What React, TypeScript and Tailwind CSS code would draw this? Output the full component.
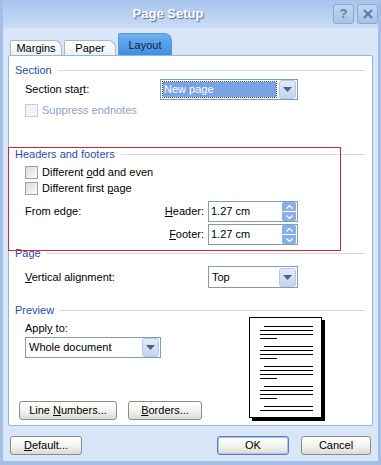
import React from 'react';

// XP-style little widgets
const Checkbox: React.FC<{ disabled?: boolean }> = ({ disabled }) => (
    <span
        className={`w-[13px] h-[13px] shrink-0 border ${disabled ? 'border-[#c3cfdf] bg-[#f1f4f8]' : 'border-[#8ea4c1] bg-gradient-to-br from-[#dcdcd6] to-[#fcfcfb]'}`}
    />
);

const DropArrow: React.FC = () => (
    <span className="w-[17px] h-[19px] shrink-0 rounded-[3px] border border-[#b7c9e6] bg-gradient-to-b from-[#e3ebf8] to-[#c3d4ef] flex items-center justify-center">
        <svg width="9" height="5" viewBox="0 0 9 5">
            <path d="M0 0H9L4.5 5Z" fill="#4d6185" />
        </svg>
    </span>
);

const Spinner: React.FC = () => (
    <span className="w-[14px] h-[19px] shrink-0 flex flex-col gap-px">
        <span className="flex-1 rounded-t-[2px] bg-[#8aaee6] flex items-center justify-center">
            <svg width="7" height="4" viewBox="0 0 7 4">
                <path d="M0.5 3.5L3.5 0.5L6.5 3.5" stroke="#ffffff" strokeWidth="1.2" fill="none" />
            </svg>
        </span>
        <span className="flex-1 rounded-b-[2px] bg-[#8aaee6] flex items-center justify-center">
            <svg width="7" height="4" viewBox="0 0 7 4">
                <path d="M0.5 0.5L3.5 3.5L6.5 0.5" stroke="#ffffff" strokeWidth="1.2" fill="none" />
            </svg>
        </span>
    </span>
);

const GroupHeader: React.FC<{ title: string; className?: string }> = ({ title, className }) => (
    <div className={`h-[13px] flex items-center gap-[6px] ${className ?? ''}`}>
        <span className="text-[#1f4ea6] leading-[13px]">{title}</span>
        <span className="flex-1 h-px bg-[#d3d9e1]" />
    </div>
);

const XpButton: React.FC<{ children: React.ReactNode; className?: string; isDefault?: boolean }> = ({ children, className, isDefault }) => (
    <button
        className={`h-[19px] rounded-[3px] border flex items-center justify-center text-black bg-gradient-to-b from-[#ffffff] via-[#f3f3ef] to-[#dcdcd6] ${isDefault ? 'border-[#5b7fb5] shadow-[inset_0_0_0_1px_#a9c4ec]' : 'border-[#8c8c8c]'} ${className ?? ''}`}
    >
        <span>{children}</span>
    </button>
);

const PagePreview: React.FC = () => {
    const groups = [9, 29, 49, 69, 89];
    return (
        <svg width="76" height="104" viewBox="0 0 76 104">
            <rect x="3" y="3" width="73" height="101" fill="#000" />
            <rect x="0.5" y="0.5" width="72" height="100" fill="#fff" stroke="#000" />
            {groups.map((g, i) => (
                <g key={g} fill="#000">
                    <rect x="15" y={g} width="49" height="1" />
                    <rect x="11" y={g + 4} width="53" height="1" />
                    {i < 4 && <rect x="11" y={g + 8} width="53" height="1" />}
                    {i < 4 && <rect x="11" y={g + 12} width="17" height="1" />}
                </g>
            ))}
        </svg>
    );
};

export default function App() {
    return (
        <div className="w-[381px] h-[465px] overflow-hidden flex flex-col bg-[#d9e6f7] font-['Liberation_Sans',Arial,sans-serif] text-[11px] text-black border-x-[3px] border-b-[4px] border-[#a3bfe8]">
            {/* Title bar */}
            <div className="h-[28px] shrink-0 flex items-center bg-gradient-to-b from-[#a7c4ee] to-[#c9dcf5] -mx-[3px] pl-[3px]">
                <div className="flex-1 text-center text-white font-bold text-[13px] [text-shadow:1px_1px_1px_#4a6a9a]">
                    Page Setup
                </div>
                <div className="flex gap-[3px] pr-[3px]">
                    <span className="w-[21px] h-[20px] rounded-[3px] border border-[#8ea6cc] bg-gradient-to-b from-[#c3d6f2] to-[#a9c2e8] flex items-center justify-center text-[#5f7aa5] font-bold text-[13px]">
                        ?
                    </span>
                    <span className="w-[21px] h-[20px] rounded-[3px] border border-[#8ea6cc] bg-gradient-to-b from-[#c3d6f2] to-[#a9c2e8] flex items-center justify-center">
                        <svg width="10" height="10" viewBox="0 0 10 10">
                            <path d="M1 1L9 9M9 1L1 9" stroke="#5f7aa5" strokeWidth="2" />
                        </svg>
                    </span>
                </div>
            </div>

            {/* Tabs */}
            <div className="h-[27px] shrink-0 flex items-end pl-[7px] gap-[2px]">
                <div className="w-[52px] h-[15px] rounded-tr-[8px] rounded-tl-[2px] border border-b-0 border-[#aab8cc] bg-gradient-to-b from-[#ffffff] to-[#eef1f5] flex items-center justify-center leading-none pt-[1px]">
                    Margins
                </div>
                <div className="w-[52px] h-[15px] rounded-tr-[8px] rounded-tl-[2px] border border-b-0 border-[#aab8cc] bg-gradient-to-b from-[#ffffff] to-[#eef1f5] flex items-center justify-center leading-none pt-[1px]">
                    Paper
                </div>
                <div className="w-[54px] h-[22px] rounded-tr-[8px] rounded-tl-[2px] border border-b-0 border-[#5b95da] bg-gradient-to-b from-[#6fb0f0] to-[#3d8fe2] flex items-center justify-center pt-[2px] text-[#14213d]">
                    Layout
                </div>
            </div>

            {/* Panel */}
            <div className="relative mx-[5px] h-[371px] shrink-0 bg-white border border-[#92b5e2] rounded-[2px] pl-[6px] pr-[7px] flex flex-col">
                {/* highlight box */}
                <div className="absolute left-[-1px] top-[91px] w-[333px] h-[104px] border border-[#d4242e]" />

                <GroupHeader title="Section" className="mt-[8px]" />
                <div className="mt-[2px] h-[21px] pl-[10px] flex items-center">
                    <span className="w-[135px]">
                        Section sta<u>r</u>t:
                    </span>
                    <span className="w-[138px] h-[21px] border border-[#7f9db9] flex items-center pl-[2px] pr-px">
                        <span className="flex-1 h-[15px] bg-[#78a3e4] text-white outline-1 outline-dotted outline-[#2f4f80] flex items-center pl-px mr-[3px]">
                            New page
                        </span>
                        <DropArrow />
                    </span>
                </div>
                <div className="mt-[4px] h-[13px] pl-[10px] flex items-center gap-[4px] text-[#8da3c5]">
                    <Checkbox disabled />
                    <span>Suppress endnotes</span>
                </div>

                <GroupHeader title="Headers and footers" className="mt-[31px]" />
                <div className="mt-[5px] h-[13px] pl-[10px] flex items-center gap-[4px]">
                    <Checkbox />
                    <span>
                        Different <u>o</u>dd and even
                    </span>
                </div>
                <div className="mt-[3px] h-[13px] pl-[10px] flex items-center gap-[4px]">
                    <Checkbox />
                    <span>
                        Different first <u>p</u>age
                    </span>
                </div>
                <div className="mt-[6px] h-[21px] pl-[10px] flex items-center w-[283px]">
                    <span>From edge:</span>
                    <span className="flex-1 text-right pr-[4px]">
                        <u>H</u>eader:
                    </span>
                    <span className="w-[90px] h-[21px] border border-[#7f9db9] flex items-center pl-[2px] pr-px">
                        <span className="flex-1">1.27 cm</span>
                        <Spinner />
                    </span>
                </div>
                <div className="mt-[2px] h-[21px] pl-[10px] flex items-center w-[283px]">
                    <span className="flex-1 text-right pr-[4px]">
                        <u>F</u>ooter:
                    </span>
                    <span className="w-[90px] h-[21px] border border-[#7f9db9] flex items-center pl-[2px] pr-px">
                        <span className="flex-1">1.27 cm</span>
                        <Spinner />
                    </span>
                </div>

                <GroupHeader title="Page" className="mt-[2px]" />
                <div className="mt-[6px] h-[22px] pl-[10px] flex items-center justify-between w-[283px]">
                    <span>
                        <u>V</u>ertical alignment:
                    </span>
                    <span className="w-[90px] h-[22px] border border-[#7f9db9] flex items-center pl-[3px] pr-px">
                        <span className="flex-1">Top</span>
                        <DropArrow />
                    </span>
                </div>

                <GroupHeader title="Preview" className="mt-[16px]" />
                <div className="flex">
                    <div className="w-[234px] flex flex-col pl-[4px]">
                        <div className="mt-[5px] h-[12px] pl-[6px] leading-[12px]">
                            Appl<u>y</u> to:
                        </div>
                        <span className="mt-[3px] ml-[6px] w-[136px] h-[21px] border border-[#7f9db9] flex items-center pl-[3px] pr-px">
                            <span className="flex-1">Whole document</span>
                            <DropArrow />
                        </span>
                        <div className="mt-[43px] flex gap-[11px]">
                            <XpButton className="w-[98px]">
                                Line <u>N</u>umbers...
                            </XpButton>
                            <XpButton className="w-[74px]">
                                <u>B</u>orders...
                            </XpButton>
                        </div>
                    </div>
                    <div>
                        <PagePreview />
                    </div>
                </div>
            </div>

            {/* Bottom buttons */}
            <div className="flex-1 flex items-start pt-[10px] pl-[7px] pr-[7px]">
                <XpButton className="w-[72px]">
                    <u>D</u>efault...
                </XpButton>
                <span className="flex-1" />
                <XpButton isDefault className="w-[72px]">
                    OK
                </XpButton>
                <XpButton className="w-[70px] ml-[12px]">Cancel</XpButton>
            </div>
        </div>
    );
}
